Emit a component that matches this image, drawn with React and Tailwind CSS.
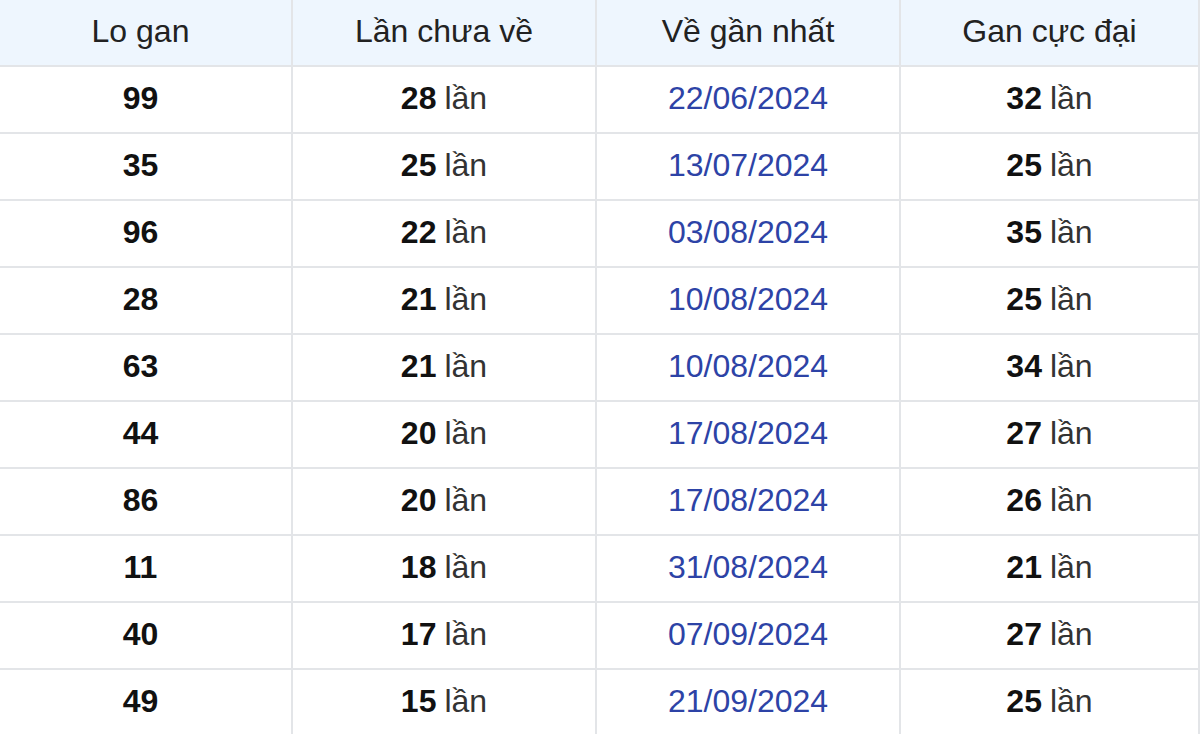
import React from "react";

const rows = [
  ["99", "28", "22/06/2024", "32"],
  ["35", "25", "13/07/2024", "25"],
  ["96", "22", "03/08/2024", "35"],
  ["28", "21", "10/08/2024", "25"],
  ["63", "21", "10/08/2024", "34"],
  ["44", "20", "17/08/2024", "27"],
  ["86", "20", "17/08/2024", "26"],
  ["11", "18", "31/08/2024", "21"],
  ["40", "17", "07/09/2024", "27"],
  ["49", "15", "21/09/2024", "25"],
];

const base = "flex items-center justify-center pb-[3px] border-r-2 border-[#e3e5e8]";
const mid = `${base} h-[67px] border-b-2`;
const last = `${base} h-[64px]`;

export default function App() {
  return (
    <div
      className="w-[1200px] h-[736px] overflow-hidden bg-white text-[32px] text-[#222]"
      style={{ fontFamily: '"Liberation Sans", Arial, sans-serif' }}
    >
      <div className="grid grid-cols-[293px_304px_304px_299px]">
        <div className={`${mid} bg-[#eef6fe] pr-[10px]`}>Lo gan</div>
        <div className={`${mid} bg-[#eef6fe]`}>Lần chưa về</div>
        <div className={`${mid} bg-[#eef6fe]`}>Về gần nhất</div>
        <div className={`${mid} bg-[#eef6fe] border-r-0`}>Gan cực đại</div>
        {rows.map((r, i) => {
          const cell = i === rows.length - 1 ? last : mid;
          return (
            <React.Fragment key={i}>
              <div className={`${cell} pr-[10px] font-bold text-[#111]`}>{r[0]}</div>
              <div className={cell}>
                <span className="font-bold text-[#111]">{r[1]}</span>
                <span className="ml-[8px] text-[#333]">lần</span>
              </div>
              <div className={`${cell} text-[#2d43a6]`}>{r[2]}</div>
              <div className={`${cell} border-r-0`}>
                <span className="font-bold text-[#111]">{r[3]}</span>
                <span className="ml-[8px] text-[#333]">lần</span>
              </div>
            </React.Fragment>
          );
        })}
      </div>
    </div>
  );
}
